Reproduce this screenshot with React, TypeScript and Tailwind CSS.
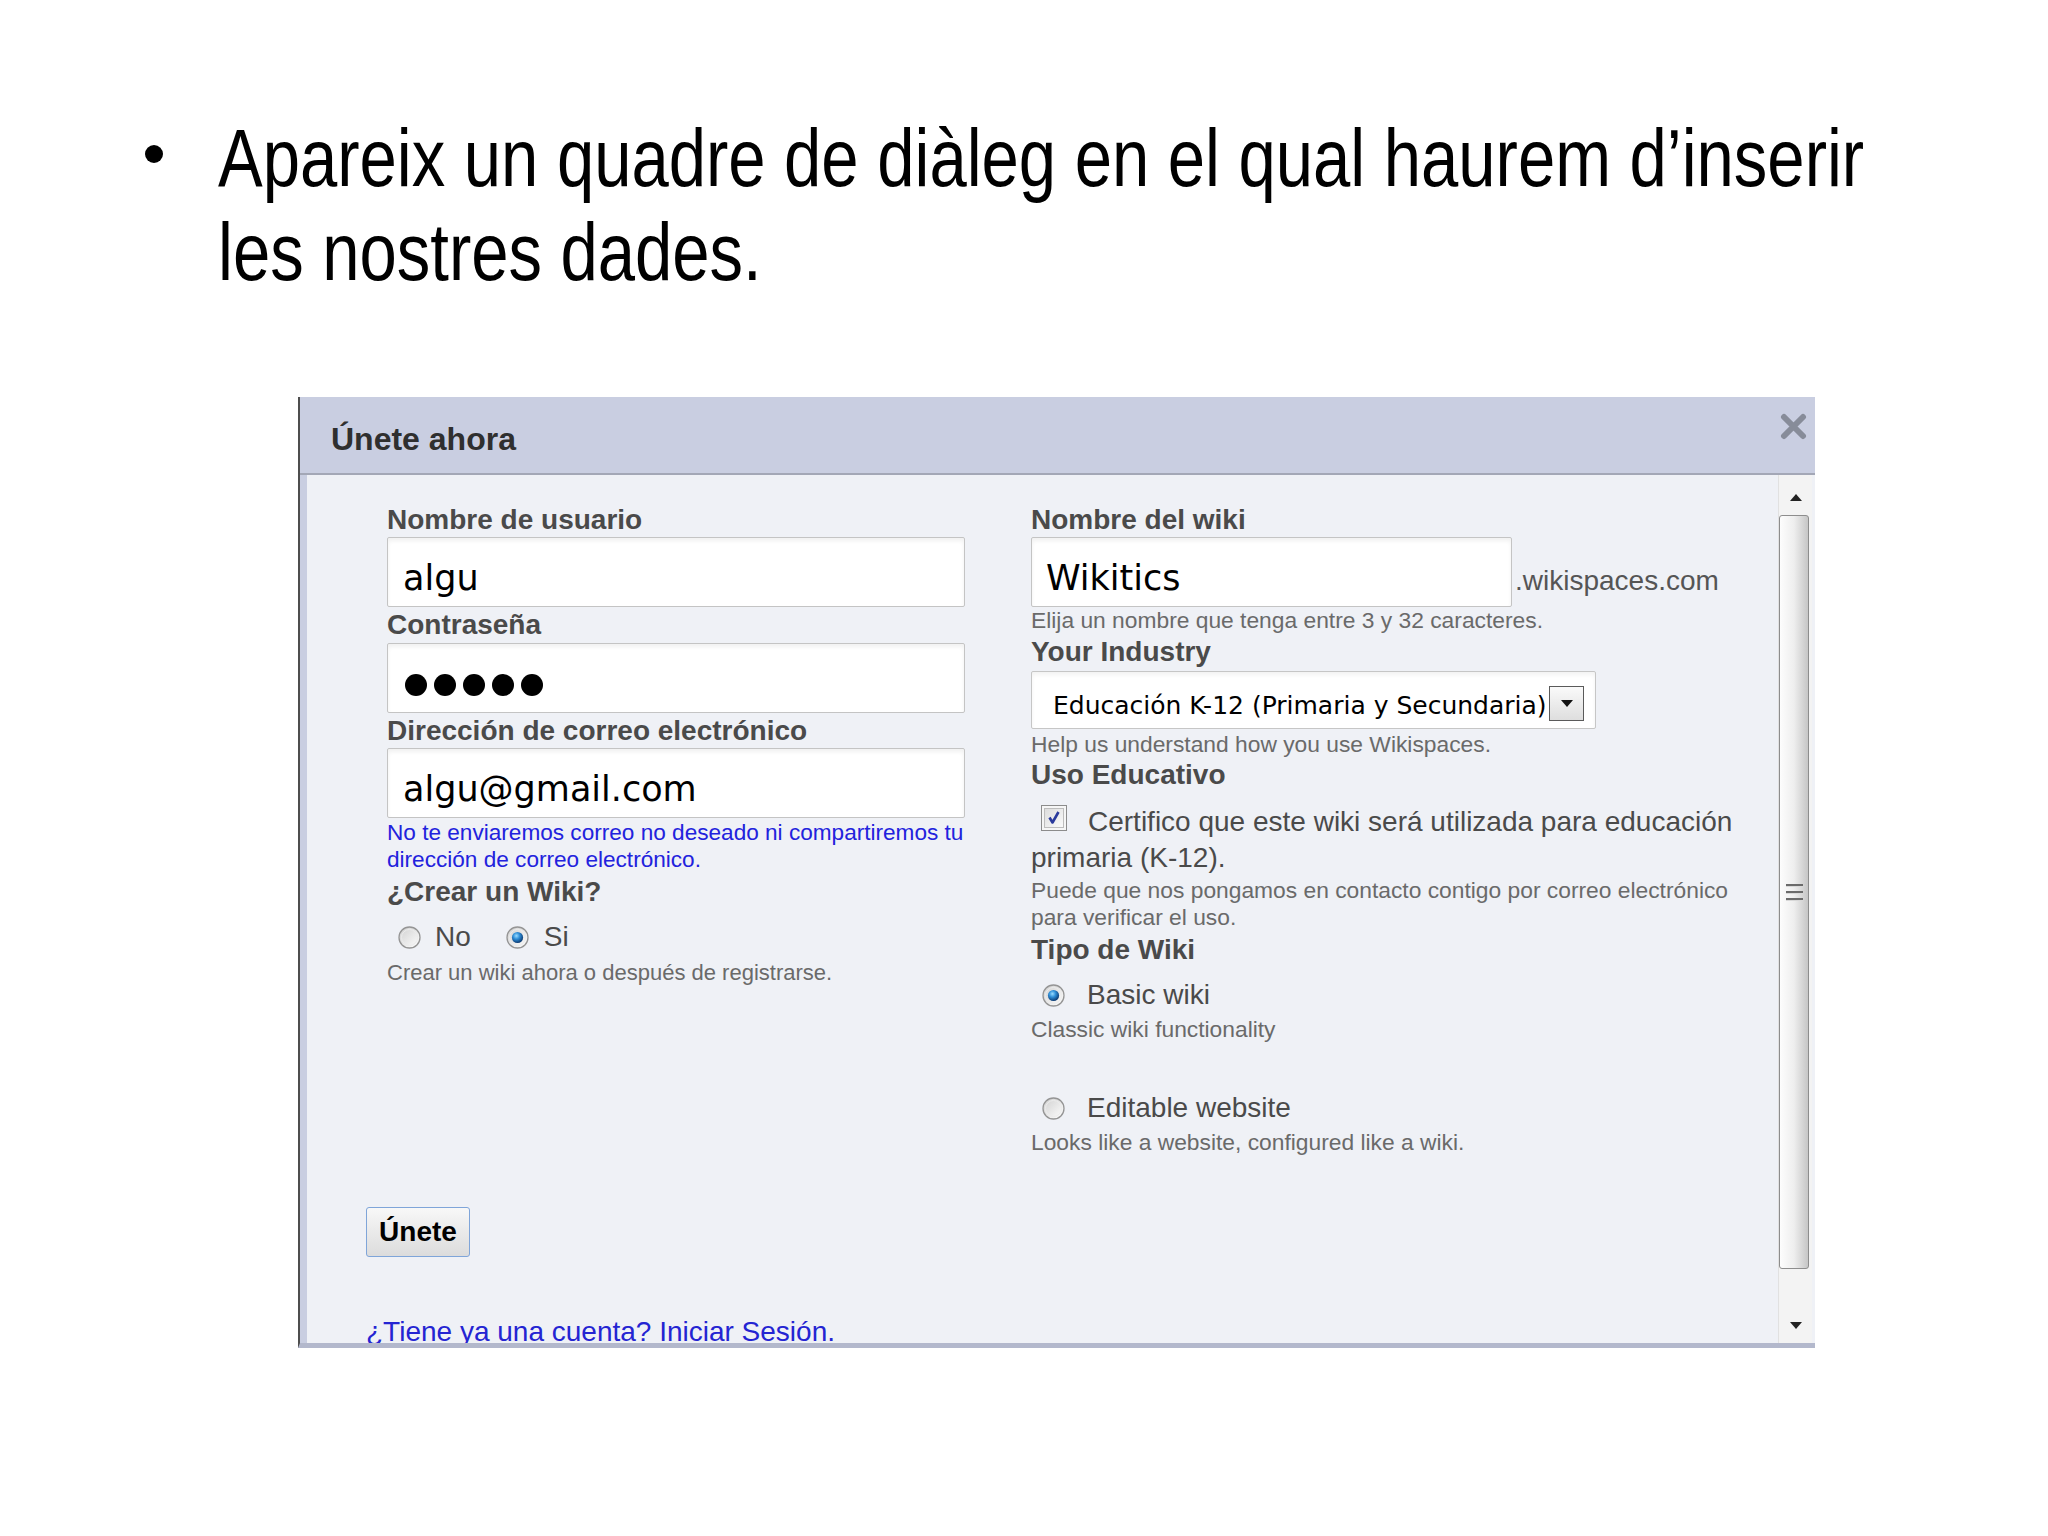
import React from "react";

function Radio({ checked }: { checked?: boolean }) {
  return (
    <svg width="23" height="23" viewBox="0 0 23 23" className="block shrink-0">
      <defs>
        <linearGradient id="radioFill" x1="0" y1="0" x2="1" y2="1">
          <stop offset="0" stopColor="#cfcfcf" />
          <stop offset="1" stopColor="#ffffff" />
        </linearGradient>
        <radialGradient id="radioDot" cx="0.4" cy="0.35" r="0.65">
          <stop offset="0" stopColor="#9adcff" />
          <stop offset="0.45" stopColor="#2f8fd8" />
          <stop offset="1" stopColor="#0c3a72" />
        </radialGradient>
      </defs>
      <circle cx="11.5" cy="11.5" r="10.5" fill="url(#radioFill)" stroke="#959595" strokeWidth="1.3" />
      <circle cx="11.5" cy="11.5" r="8" fill="none" stroke="#ececec" strokeWidth="1" />
      {checked && <circle cx="11.5" cy="11.5" r="5.6" fill="url(#radioDot)" />}
    </svg>
  );
}

function CheckBox() {
  return (
    <svg width="26" height="26" viewBox="0 0 26 26" className="block">
      <defs>
        <linearGradient id="cbFill" x1="0" y1="0" x2="1" y2="1">
          <stop offset="0" stopColor="#dcdcdc" />
          <stop offset="1" stopColor="#fbfbfb" />
        </linearGradient>
      </defs>
      <rect x="0.5" y="0.5" width="25" height="25" fill="#f6f6f6" stroke="#8c8c8c" />
      <rect x="3.5" y="3.5" width="19" height="19" fill="url(#cbFill)" stroke="#bdbdbd" />
      <path d="M8.5 12.5 L11.5 17.5 L17.5 7" stroke="#2a3a9c" strokeWidth="2.6" fill="none" strokeLinejoin="round" />
    </svg>
  );
}

function Label({ children, className = "" }: { children: React.ReactNode; className?: string }) {
  return (
    <div className={"h-[28px] leading-[28px] text-[28px] font-bold text-[#4a4a4a] whitespace-nowrap " + className}>
      {children}
    </div>
  );
}

function Help({ children, className = "" }: { children: React.ReactNode; className?: string }) {
  return (
    <div className={"leading-[27px] text-[22.8px] text-[#6a6a6a] whitespace-nowrap " + className}>{children}</div>
  );
}

export default function App() {
  return (
    <div className="w-[2048px] h-[1536px] bg-white overflow-hidden font-['Liberation_Sans',Arial,sans-serif]">
      {/* Slide bullet */}
      <div className="flex items-start pt-[111px] pl-[145px]">
        <div className="w-[18px] h-[18px] rounded-full bg-black mt-[34px] shrink-0" />
        <p className="ml-[55px] text-[82px] leading-[94px] text-black whitespace-nowrap origin-left scale-x-[0.817] font-['Liberation_Sans_Narrow','Arial_Narrow','Liberation_Sans',sans-serif]">
          Apareix un quadre de diàleg en el qual haurem d’inserir
          <br />
          les nostres dades.
        </p>
      </div>

      {/* Dialog */}
      <div className="ml-[298px] mt-[98px] w-[1517px] h-[951px] flex flex-col border-l-2 border-b-[5px] border-l-[#4e4e4e] border-b-[#b3b8cc]">
        {/* Title bar */}
        <div className="h-[78px] shrink-0 flex items-start bg-[#c9cee1] border-b-2 border-[#a3a7b6]">
          <div className="ml-[31px] mt-[26px] text-[32px] leading-[32px] font-bold text-[#2f2f2f]">Únete ahora</div>
          <svg width="27" height="27" viewBox="0 0 27 27" className="ml-auto mr-[8px] mt-[16px]">
            <path d="M4 4 L23 23 M23 4 L4 23" stroke="#878c99" strokeWidth="6" strokeLinecap="round" />
          </svg>
        </div>

        {/* Body */}
        <div className="flex-1 flex bg-[#eff1f6] overflow-hidden">
          <div className="w-[7px] shrink-0 bg-[#c9cee1]" />

          <div className="flex-1 overflow-hidden pl-[59px] pt-[31px]">
            <div className="flex items-start pl-[21px]">
              {/* Left column */}
              <div className="w-[578px] flex flex-col shrink-0">
                <Label>Nombre de usuario</Label>
                <div className="mt-[3px] h-[70px] flex items-center pt-[12px] pl-[15px] bg-white border border-[#c4c4c4] rounded-[2px] shadow-[inset_0_3px_4px_rgba(0,0,0,0.06)]">
                  <span className="font-['DejaVu_Sans',sans-serif] text-[35px] leading-[40px] text-black">algu</span>
                </div>
                <Label className="mt-[4px]">Contraseña</Label>
                <div className="mt-[4px] h-[70px] flex items-center gap-[7px] pt-[14px] pl-[17px] bg-white border border-[#c4c4c4] rounded-[2px] shadow-[inset_0_3px_4px_rgba(0,0,0,0.06)]">
                  <div className="w-[22px] h-[22px] rounded-full bg-black" />
                  <div className="w-[22px] h-[22px] rounded-full bg-black" />
                  <div className="w-[22px] h-[22px] rounded-full bg-black" />
                  <div className="w-[22px] h-[22px] rounded-full bg-black" />
                  <div className="w-[22px] h-[22px] rounded-full bg-black" />
                </div>
                <Label className="mt-[4px]">Dirección de correo electrónico</Label>
                <div className="mt-[3px] h-[70px] flex items-center pt-[12px] pl-[15px] bg-white border border-[#c4c4c4] rounded-[2px] shadow-[inset_0_3px_4px_rgba(0,0,0,0.06)]">
                  <span className="font-['DejaVu_Sans',sans-serif] text-[35px] leading-[40px] text-black">algu@gmail.com</span>
                </div>
                <div className="mt-[1px] leading-[27px] text-[22.6px] text-[#2222dd] whitespace-nowrap">
                  No te enviaremos correo no deseado ni compartiremos tu
                  <br />
                  dirección de correo electrónico.
                </div>
                <Label className="mt-[5px]">¿Crear un Wiki?</Label>
                <div className="mt-[17px] h-[28px] flex items-center text-[28px] leading-[28px] text-[#4a4a4a]">
                  <div className="ml-[11px]">
                    <Radio />
                  </div>
                  <span className="ml-[14px]">No</span>
                  <div className="ml-[35px]">
                    <Radio checked />
                  </div>
                  <span className="ml-[15px]">Si</span>
                </div>
                <Help className="mt-[8px] !text-[22px]">Crear un wiki ahora o después de registrarse.</Help>
              </div>

              {/* Right column */}
              <div className="ml-[66px] w-[740px] flex flex-col shrink-0">
                <Label>Nombre del wiki</Label>
                <div className="mt-[3px] flex items-start">
                  <div className="w-[481px] h-[70px] flex items-center pt-[12px] pl-[14px] bg-white border border-[#c4c4c4] rounded-[2px] shadow-[inset_0_3px_4px_rgba(0,0,0,0.06)]">
                    <span className="font-['DejaVu_Sans',sans-serif] text-[35px] leading-[40px] text-black">Wikitics</span>
                  </div>
                  <span className="ml-[3px] mt-[30px] text-[28px] leading-[28px] text-[#555555]">.wikispaces.com</span>
                </div>
                <Help>Elija un nombre que tenga entre 3 y 32 caracteres.</Help>
                <Label className="mt-[4px]">Your Industry</Label>
                <div className="mt-[5px] w-[565px] h-[58px] flex items-start bg-white border border-[#c6c6c6] rounded-[2px] shadow-[inset_0_3px_4px_rgba(0,0,0,0.05)]">
                  <span className="ml-[21px] mt-[19px] font-['DejaVu_Sans',sans-serif] text-[25px] leading-[30px] text-black whitespace-nowrap">
                    Educación K-12 (Primaria y Secundaria)
                  </span>
                  <div className="ml-auto mr-[11px] mt-[14px] w-[35px] h-[35px] shrink-0 flex items-center justify-center border border-[#5a5a5a] bg-gradient-to-b from-[#fafafa] to-[#dedede]">
                    <svg width="12" height="7" viewBox="0 0 12 7">
                      <path d="M0 0 H12 L6 7 Z" fill="#111" />
                    </svg>
                  </div>
                </div>
                <Help className="mt-[2px]">Help us understand how you use Wikispaces.</Help>
                <Label className="mt-[3px]">Uso Educativo</Label>
                <div className="mt-[15px] text-[28px] leading-[36px] text-[#4a4a4a] whitespace-nowrap">
                  <span className="inline-block align-baseline ml-[10px] mr-[21px]">
                    <CheckBox />
                  </span>
                  Certifico que este wiki será utilizada para educación
                  <br />
                  primaria (K-12).
                </div>
                <Help className="mt-[1px]">
                  Puede que nos pongamos en contacto contigo por correo electrónico
                  <br />
                  para verificar el uso.
                </Help>
                <Label className="mt-[5px]">Tipo de Wiki</Label>
                <div className="mt-[17px] h-[28px] flex items-center text-[28px] leading-[28px] text-[#4a4a4a]">
                  <div className="ml-[11px]">
                    <Radio checked />
                  </div>
                  <span className="ml-[22px]">Basic wiki</span>
                </div>
                <Help className="mt-[7px]">Classic wiki functionality</Help>
                <div className="mt-[51px] h-[28px] flex items-center text-[28px] leading-[28px] text-[#4a4a4a]">
                  <div className="ml-[11px]">
                    <Radio />
                  </div>
                  <span className="ml-[22px]">Editable website</span>
                </div>
                <Help className="mt-[7px]">Looks like a website, configured like a wiki.</Help>
              </div>
            </div>

            <button className="mt-[51px] w-[104px] h-[50px] flex items-center justify-center border border-[#7fa5d9] rounded-[3px] bg-gradient-to-b from-[#f8f8f8] to-[#dcdcdc] text-[28px] leading-[28px] font-bold text-black">
              Únete
            </button>
            <div className="mt-[61px] text-[28px] leading-[28px] text-[#2424d2] whitespace-nowrap">
              ¿Tiene ya una cuenta? Iniciar Sesión.
            </div>
          </div>

          {/* Scrollbar */}
          <div className="w-[34px] shrink-0 flex flex-col bg-[#f3f3f3] border-l border-[#e1e1e1]">
            <div className="h-[40px] flex justify-center pt-[19px] shrink-0">
              <svg width="12" height="7" viewBox="0 0 12 7">
                <path d="M0 7 H12 L6 0 Z" fill="#222" />
              </svg>
            </div>
            <div className="w-[30px] h-[754px] shrink-0 flex items-center justify-center rounded-[3px] border border-[#8d8d8d] bg-gradient-to-r from-[#fdfdfd] via-[#eeeeee] to-[#c6c6c6]">
              <div className="flex flex-col gap-[4px]">
                <div className="w-[17px] h-[3px] border-t-2 border-[#6b6b6b] bg-[#d8d8d8]" />
                <div className="w-[17px] h-[3px] border-t-2 border-[#6b6b6b] bg-[#d8d8d8]" />
                <div className="w-[17px] h-[3px] border-t-2 border-[#6b6b6b] bg-[#d8d8d8]" />
              </div>
            </div>
            <div className="flex justify-center mt-[53px]">
              <svg width="12" height="7" viewBox="0 0 12 7">
                <path d="M0 0 H12 L6 7 Z" fill="#222" />
              </svg>
            </div>
          </div>
          <div className="w-[3px] shrink-0" />
        </div>
      </div>
    </div>
  );
}
